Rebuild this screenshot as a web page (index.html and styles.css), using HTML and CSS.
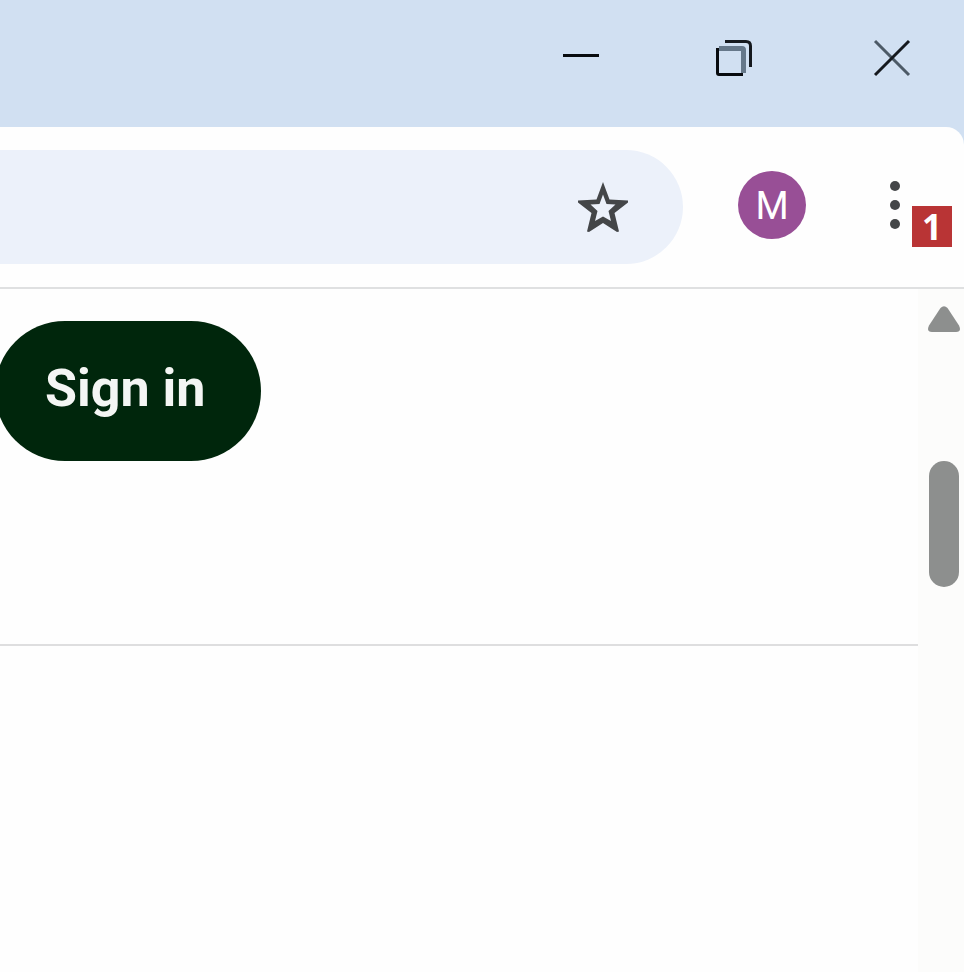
FILE: index.html
```html
<!DOCTYPE html>
<html lang="en">
<head>
  <meta charset="UTF-8" />
  <meta name="viewport" content="width=device-width, initial-scale=1.0" />
  <title>Sign in</title>
  <link rel="stylesheet" href="styles.css">
</head>
<body>

  <!-- Window controls -->
  <div class="titlebar">
    <button class="window-btn" type="button" aria-label="Minimize">
      <svg width="40" height="40" viewBox="0 0 40 40"><path d="M3 17.5h36" stroke="#080b0f" stroke-width="3" /></svg>
    </button>
    <button class="window-btn" type="button" aria-label="Restore">
      <svg width="40" height="40" viewBox="0 0 40 40" fill="none">
        <path d="M3 10.5h23q1.500 0 1.500 1.500V35" stroke="#66788a" stroke-width="5" />
        <path d="M1.500 10v25q0 1.500 1.500 1.500h24" stroke="#080b0f" stroke-width="3" />
        <path d="M9 3.500h21q4.500 0 4.500 4.500V29" stroke="#15191e" stroke-width="3" />
      </svg>
    </button>
    <button class="window-btn" type="button" aria-label="Close">
      <svg width="40" height="40" viewBox="0 0 40 40" fill="none" stroke-width="3">
        <path d="M3 3l34 34" stroke="#4c5a67" />
        <path d="M37 3L3 37" stroke="#15191e" />
      </svg>
    </button>
  </div>

  <!-- Toolbar -->
  <div class="toolbar-wrap">
    <div class="toolbar">
      <div class="address">
        <button class="icon-btn" type="button" aria-label="Bookmark this page">
          <svg width="52" height="52" viewBox="0 0 52 52">
            <path fill="#444648" fill-rule="evenodd" d="M26 1L32.500 18.500L51 19.500V21.500L37.500 32L42 50.500L40 51L26 42L12 51L10 50.500L14.500 32L1 21.500V19.500L19.500 18.500ZM26 13.500L22.500 23L13.500 23.500L20.500 30L18 40L26 35.500L34 40L31.500 30L38.500 23.500L29.500 23Z" />
          </svg>
        </button>
      </div>
      <div class="actions">
        <button class="avatar" type="button">M</button>
        <button class="icon-btn" type="button" aria-label="Menu">
          <svg width="24" height="60" viewBox="0 0 24 60" fill="#444648">
            <circle cx="12" cy="11" r="5" />
            <circle cx="12" cy="30" r="5" />
            <circle cx="12" cy="49" r="5" />
          </svg>
        </button>
      </div>
      <span class="callout">1</span>
    </div>
  </div>

  <!-- Page -->
  <div class="view">
    <main class="page">
      <header class="page-header">
        <button class="sign-in" type="button">Sign in</button>
      </header>
    </main>
    <div class="scrollbar">
      <svg class="arrow" width="34" height="27" viewBox="0 0 34 27">
        <path fill="#8d8f8e" d="M13.500 2Q17-1.500 20.500 2L32 19.500Q35 26 29 26H5Q-1 26 2 19.500Z" />
      </svg>
      <div class="thumb"></div>
    </div>
  </div>

</body>
</html>
```

FILE: styles.css
```css
* { box-sizing: border-box; }
body { margin: 0; min-height: 100vh; display: flex; flex-direction: column; background: #fefefe; font-family: Roboto, "Liberation Sans", sans-serif; }
button { padding: 0; border: none; background: none; cursor: pointer; }
svg { display: block; }

.titlebar { display: flex; justify-content: flex-end; gap: 116px; padding: 38px 52px 49px 0; background: #d1e0f2; }

.toolbar-wrap { background: #d1e0f2; }
.toolbar { position: relative; display: flex; align-items: center; gap: 55px; padding: 23px 57px 23px 0; background: #fefefe; border-bottom: 2px solid #dfe0e1; border-top-right-radius: 18px; }
.address { flex: 1; display: flex; align-items: center; justify-content: flex-end; height: 114px; padding-right: 54px; background: #ecf1fa; border-radius: 0 57px 57px 0; }
.actions { display: flex; align-items: center; gap: 77px; margin-bottom: 4px; }
.avatar { width: 68px; height: 68px; padding-top: 2px; border-radius: 50%; background: #984f96; color: #fff; font: 400 38px Roboto, sans-serif; }
.callout { position: absolute; top: 79px; right: 12px; width: 40px; height: 41px; background: #b93435; color: #fff; font: 700 35px/41px "Open Sans", sans-serif; text-align: center; }

.view { flex: 1; display: flex; }
.page { flex: 1; overflow: hidden; }
.page-header { padding: 32px 0 183px; border-bottom: 2px solid #dededf; }
.sign-in { height: 140px; margin-left: -5px; padding: 0 56px 6px 50px; border-radius: 70px; background: #00260c; color: #f4f6f4; font: bold 52px Roboto, sans-serif; }

.scrollbar { width: 46px; padding: 17px 0 0 9px; background: #fcfcfb; }
.thumb { width: 30px; height: 126px; margin: 128px 0 0 2px; border-radius: 15px; background: #8d8f8e; }
```
